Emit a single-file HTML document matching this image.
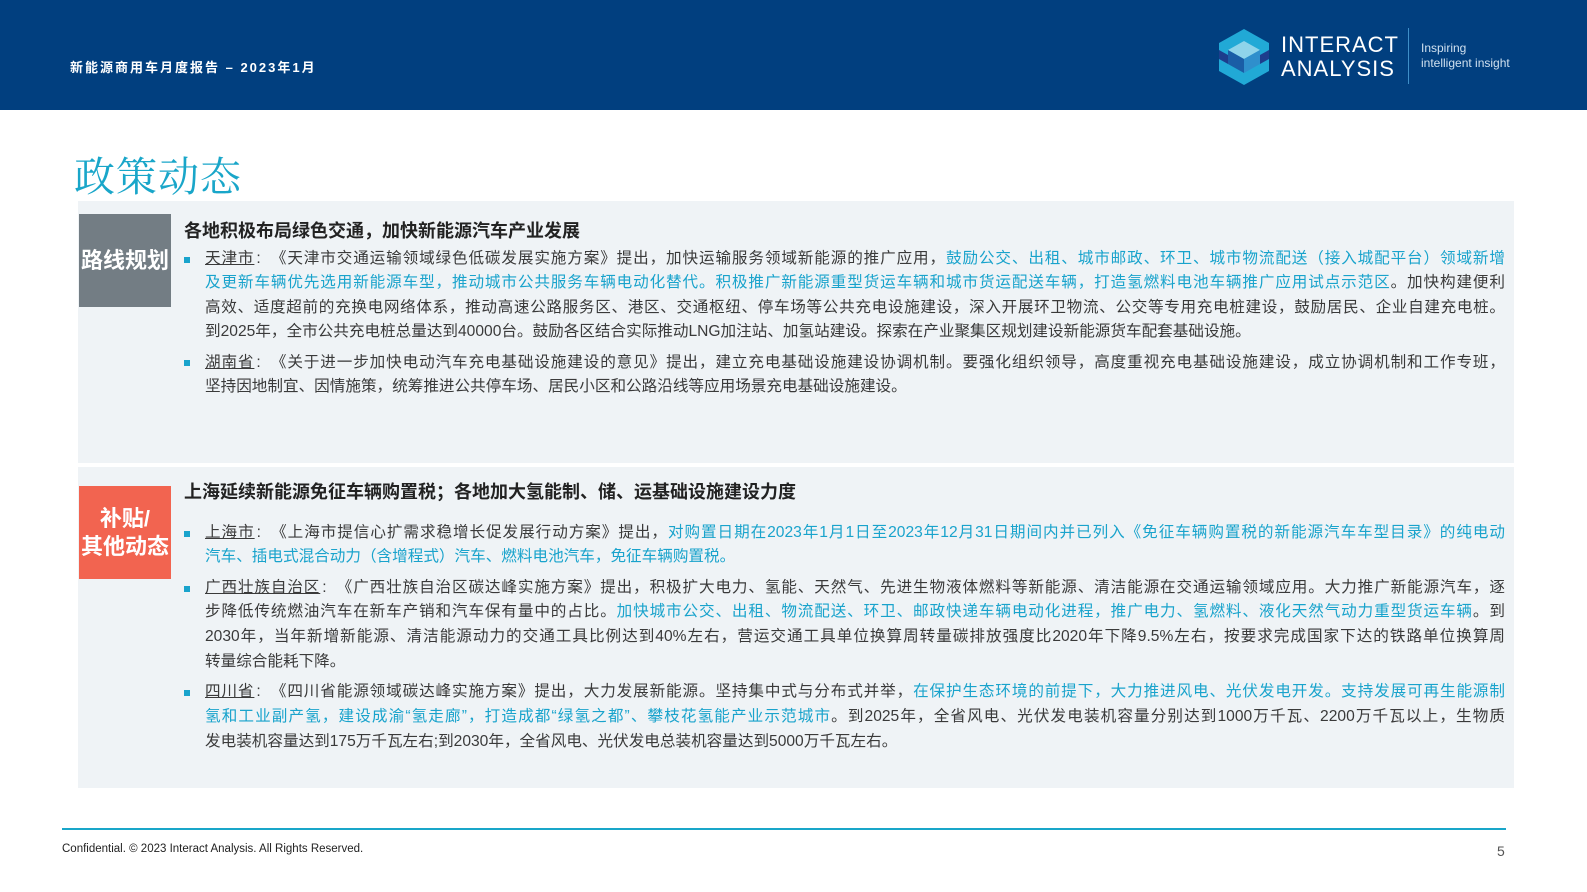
<!DOCTYPE html>
<html><head><meta charset="utf-8">
<style>
*{margin:0;padding:0;box-sizing:border-box}
body{width:1587px;height:892px;position:relative;background:#fff;font-family:"Liberation Sans","Noto Sans CJK SC",sans-serif;color:#333;overflow:hidden}
.hdr{position:absolute;left:0;top:0;width:1587px;height:110px;background:#013f7f}
.ht{position:absolute;left:70px;top:57px;color:#fff;font-weight:bold;font-size:13px;letter-spacing:2px}
.title{position:absolute;left:74px;top:144px;font-family:"Noto Serif CJK SC",serif;font-size:41px;color:#19a6c9;letter-spacing:1px}
.panel{position:absolute;left:78px;width:1436px;background:#eff3f6}
.lab{position:absolute;left:79px;width:92px;color:#fff;font-weight:bold;font-size:22px;text-align:center;display:flex;align-items:center;justify-content:center;line-height:28px}
.h{position:absolute;left:184px;font-weight:bold;font-size:18px;color:#222;white-space:nowrap}
.l{position:absolute;left:205px;width:1300px;font-size:15.6px;white-space:nowrap;text-align:justify;text-align-last:justify;line-height:20px;color:#3a3a3a}
.l.e{text-align-last:left}
.b{color:#19a3cc}
.u{text-decoration:underline}
.c{display:inline-block;width:1em;text-align:left;padding-left:2px}
.sq{position:absolute;left:184px;width:6px;height:6px;background:#19a3cc}
.foot{position:absolute;left:62px;top:828px;width:1444px;height:2px;background:#19a6c9}
</style></head><body>
<div class="hdr">
<div class="ht">新能源商用车月度报告 – 2023年1月</div>
<svg style="position:absolute;left:1218px;top:28px" width="52" height="58" viewBox="0 0 52 58">
<polygon points="26,1 51,15 51,43 26,57 1,43 1,15" fill="#21a9d6"/>
<polygon points="26,13 42,22 26,31 10,22" fill="#8fd4ea"/>
<polygon points="10,22 26,31 26,45 10,36" fill="#1a5da6"/>
<polygon points="42,22 26,31 26,45 42,36" fill="#2f8fcc"/>
<polygon points="1,22 10,27 10,36 1,31" fill="#1d3d8c"/>
<polygon points="51,22 42,27 42,36 51,31" fill="#1d3d8c"/>
</svg>
<div style="position:absolute;left:1281px;top:33px;color:#fff;font-size:22px;line-height:24px;letter-spacing:1px">INTERACT<br>ANALYSIS</div>
<div style="position:absolute;left:1408px;top:28px;width:1px;height:56px;background:#3f8fc8"></div>
<div style="position:absolute;left:1421px;top:41px;color:#cfe0ef;font-size:12px;line-height:15px">Inspiring<br>intelligent insight</div>
</div>
<div class="title">政策动态</div>

<div class="panel" style="top:201px;height:262px"></div>
<div class="lab" style="top:214px;height:93px;background:#737d84">路线规划</div>
<div class="h" style="top:217px">各地积极布局绿色交通，加快新能源汽车产业发展</div>
<div class="sq" style="top:257px"></div>
<div class="l" style="top:249px"><span class="u">天津市</span><span class="c">:</span>《天津市交通运输领域绿色低碳发展实施方案》提出，加快运输服务领域新能源的推广应用，<span class="b">鼓励公交、出租、城市邮政、环卫、城市物流配送（接入城配平台）领域新增</span></div>
<div class="l b" style="top:273px">及更新车辆优先选用新能源车型，推动城市公共服务车辆电动化替代。积极推广新能源重型货运车辆和城市货运配送车辆，打造氢燃料电池车辆推广应用试点示范区<span style="color:#3a3a3a">。加快构建便利</span></div>
<div class="l" style="top:298px">高效、适度超前的充换电网络体系，推动高速公路服务区、港区、交通枢纽、停车场等公共充电设施建设，深入开展环卫物流、公交等专用充电桩建设，鼓励居民、企业自建充电桩。</div>
<div class="l e" style="top:322px">到2025年，全市公共充电桩总量达到40000台。鼓励各区结合实际推动LNG加注站、加氢站建设。探索在产业聚集区规划建设新能源货车配套基础设施。</div>
<div class="sq" style="top:360px"></div>
<div class="l" style="top:353px"><span class="u">湖南省</span><span class="c">:</span>《关于进一步加快电动汽车充电基础设施建设的意见》提出，建立充电基础设施建设协调机制。要强化组织领导，高度重视充电基础设施建设，成立协调机制和工作专班，</div>
<div class="l e" style="top:377px">坚持因地制宜、因情施策，统筹推进公共停车场、居民小区和公路沿线等应用场景充电基础设施建设。</div>

<div class="panel" style="top:467px;height:321px"></div>
<div class="lab" style="top:486px;height:93px;background:#f26450">补贴/<br>其他动态</div>
<div class="h" style="top:478px">上海延续新能源免征车辆购置税；各地加大氢能制、储、运基础设施建设力度</div>
<div class="sq" style="top:531px"></div>
<div class="l" style="top:523px"><span class="u">上海市</span><span class="c">:</span>《上海市提信心扩需求稳增长促发展行动方案》提出，<span class="b">对购置日期在2023年1月1日至2023年12月31日期间内并已列入《免征车辆购置税的新能源汽车车型目录》的纯电动</span></div>
<div class="l e b" style="top:547px">汽车、插电式混合动力（含增程式）汽车、燃料电池汽车，免征车辆购置税。</div>
<div class="sq" style="top:586px"></div>
<div class="l" style="top:578px"><span class="u">广西壮族自治区</span><span class="c">:</span>《广西壮族自治区碳达峰实施方案》提出，积极扩大电力、氢能、天然气、先进生物液体燃料等新能源、清洁能源在交通运输领域应用。大力推广新能源汽车，逐</div>
<div class="l" style="top:602px">步降低传统燃油汽车在新车产销和汽车保有量中的占比。<span class="b">加快城市公交、出租、物流配送、环卫、邮政快递车辆电动化进程，推广电力、氢燃料、液化天然气动力重型货运车辆</span>。到</div>
<div class="l" style="top:627px">2030年，当年新增新能源、清洁能源动力的交通工具比例达到40%左右，营运交通工具单位换算周转量碳排放强度比2020年下降9.5%左右，按要求完成国家下达的铁路单位换算周</div>
<div class="l e" style="top:652px">转量综合能耗下降。</div>
<div class="sq" style="top:690px"></div>
<div class="l" style="top:682px"><span class="u">四川省</span><span class="c">:</span>《四川省能源领域碳达峰实施方案》提出，大力发展新能源。坚持集中式与分布式并举，<span class="b">在保护生态环境的前提下，大力推进风电、光伏发电开发。支持发展可再生能源制</span></div>
<div class="l" style="top:707px"><span class="b">氢和工业副产氢，建设成渝“氢走廊”，打造成都“绿氢之都”、攀枝花氢能产业示范城市</span>。到2025年，全省风电、光伏发电装机容量分别达到1000万千瓦、2200万千瓦以上，生物质</div>
<div class="l e" style="top:732px">发电装机容量达到175万千瓦左右;到2030年，全省风电、光伏发电总装机容量达到5000万千瓦左右。</div>

<div class="foot"></div>
<div style="position:absolute;left:62px;top:843px;font-size:11.5px;color:#222">Confidential. © 2023 Interact Analysis. All Rights Reserved.</div>
<div style="position:absolute;left:1497px;top:843px;font-size:14px;color:#555">5</div>
</body></html>
